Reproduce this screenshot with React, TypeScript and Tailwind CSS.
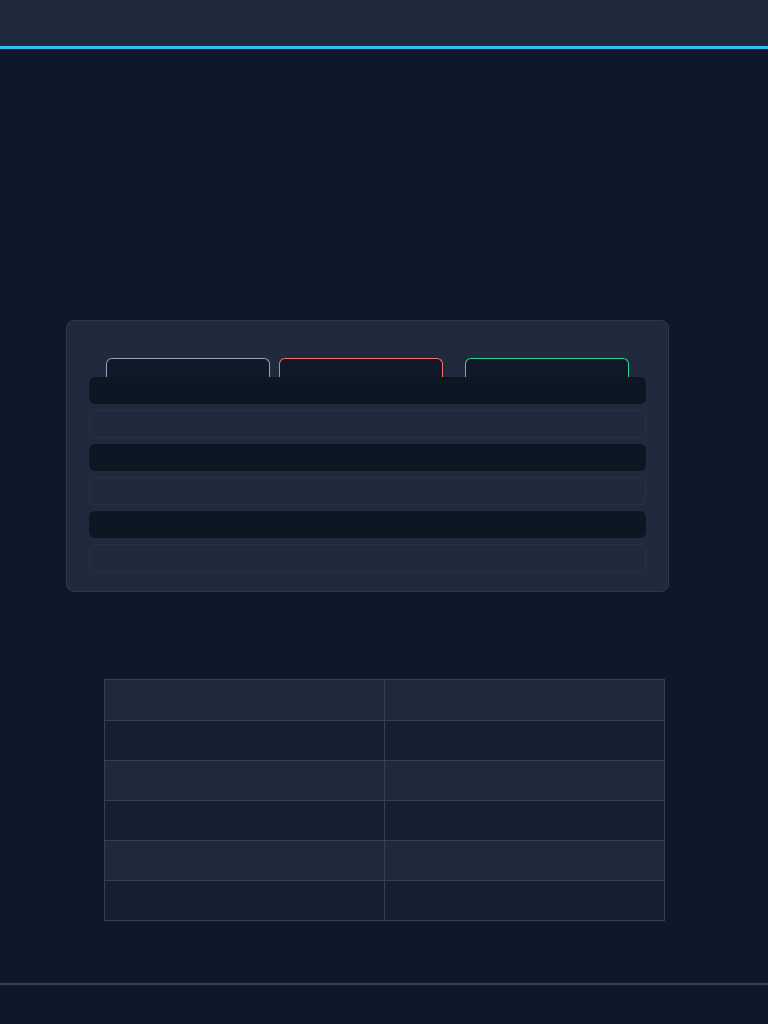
import React from "react";

const tabs = [
  { key: "neutral", cls: "border-[#94a3b8] ml-[17px]" },
  { key: "danger", cls: "border-[#f87171] ml-[9px]" },
  { key: "success", cls: "border-[#34d399] ml-[22px]" },
];

const rows = [0, 1, 2];
const tableRows = [0, 1, 2, 3, 4, 5];

export default function App() {
  return (
    <div className="min-h-[1024px] bg-[#0f172a] flex flex-col" style={{ fontFamily: "Inter, 'Noto Sans', sans-serif" }}>
      {/* top bar */}
      <header className="h-[49px] bg-[#1e293b] border-b-[3px] border-[#38bdf8] shrink-0" />

      <main className="flex-1 flex flex-col">
        {/* panel with tab strip and list */}
        <section className="mt-[271px] ml-[66px] w-[603px] h-[272px] rounded-lg border border-[#2d3a4e] bg-[#1f2a3c] px-[22px] pt-[37px]">
          <div className="flex h-[19px]">
            {tabs.map((t) => (
              <div
                key={t.key}
                className={`w-[164px] h-[19px] rounded-t-[6px] border border-b-0 bg-[#111827] ${t.cls}`}
              />
            ))}
          </div>
          <div className="flex flex-col">
            {rows.map((r) => (
              <React.Fragment key={r}>
                <div className="h-[27px] rounded-md bg-[#0d1723]" />
                <div className="mt-[6px] mb-[6px] h-[28px] rounded-md border border-[#26324a] bg-[#1f2a3c]" />
              </React.Fragment>
            ))}
          </div>
        </section>

        {/* data grid */}
        <div className="mt-[87px] mx-auto w-[561px] border border-[#334155]">
          {tableRows.map((r) => (
            <div
              key={r}
              className={`grid grid-cols-[280px_1fr] h-[40px] ${r > 0 ? "border-t border-[#334155]" : ""} ${r % 2 === 0 ? "bg-[#1e293b]" : "bg-[#172032]"}`}
            >
              <div className="border-r border-[#334155]" />
              <div />
            </div>
          ))}
        </div>

        <div className="flex-1" />
      </main>

      {/* footer */}
      <footer className="h-[41px] border-t-2 border-[#334155] bg-[#0f172a] shrink-0" />
    </div>
  );
}
